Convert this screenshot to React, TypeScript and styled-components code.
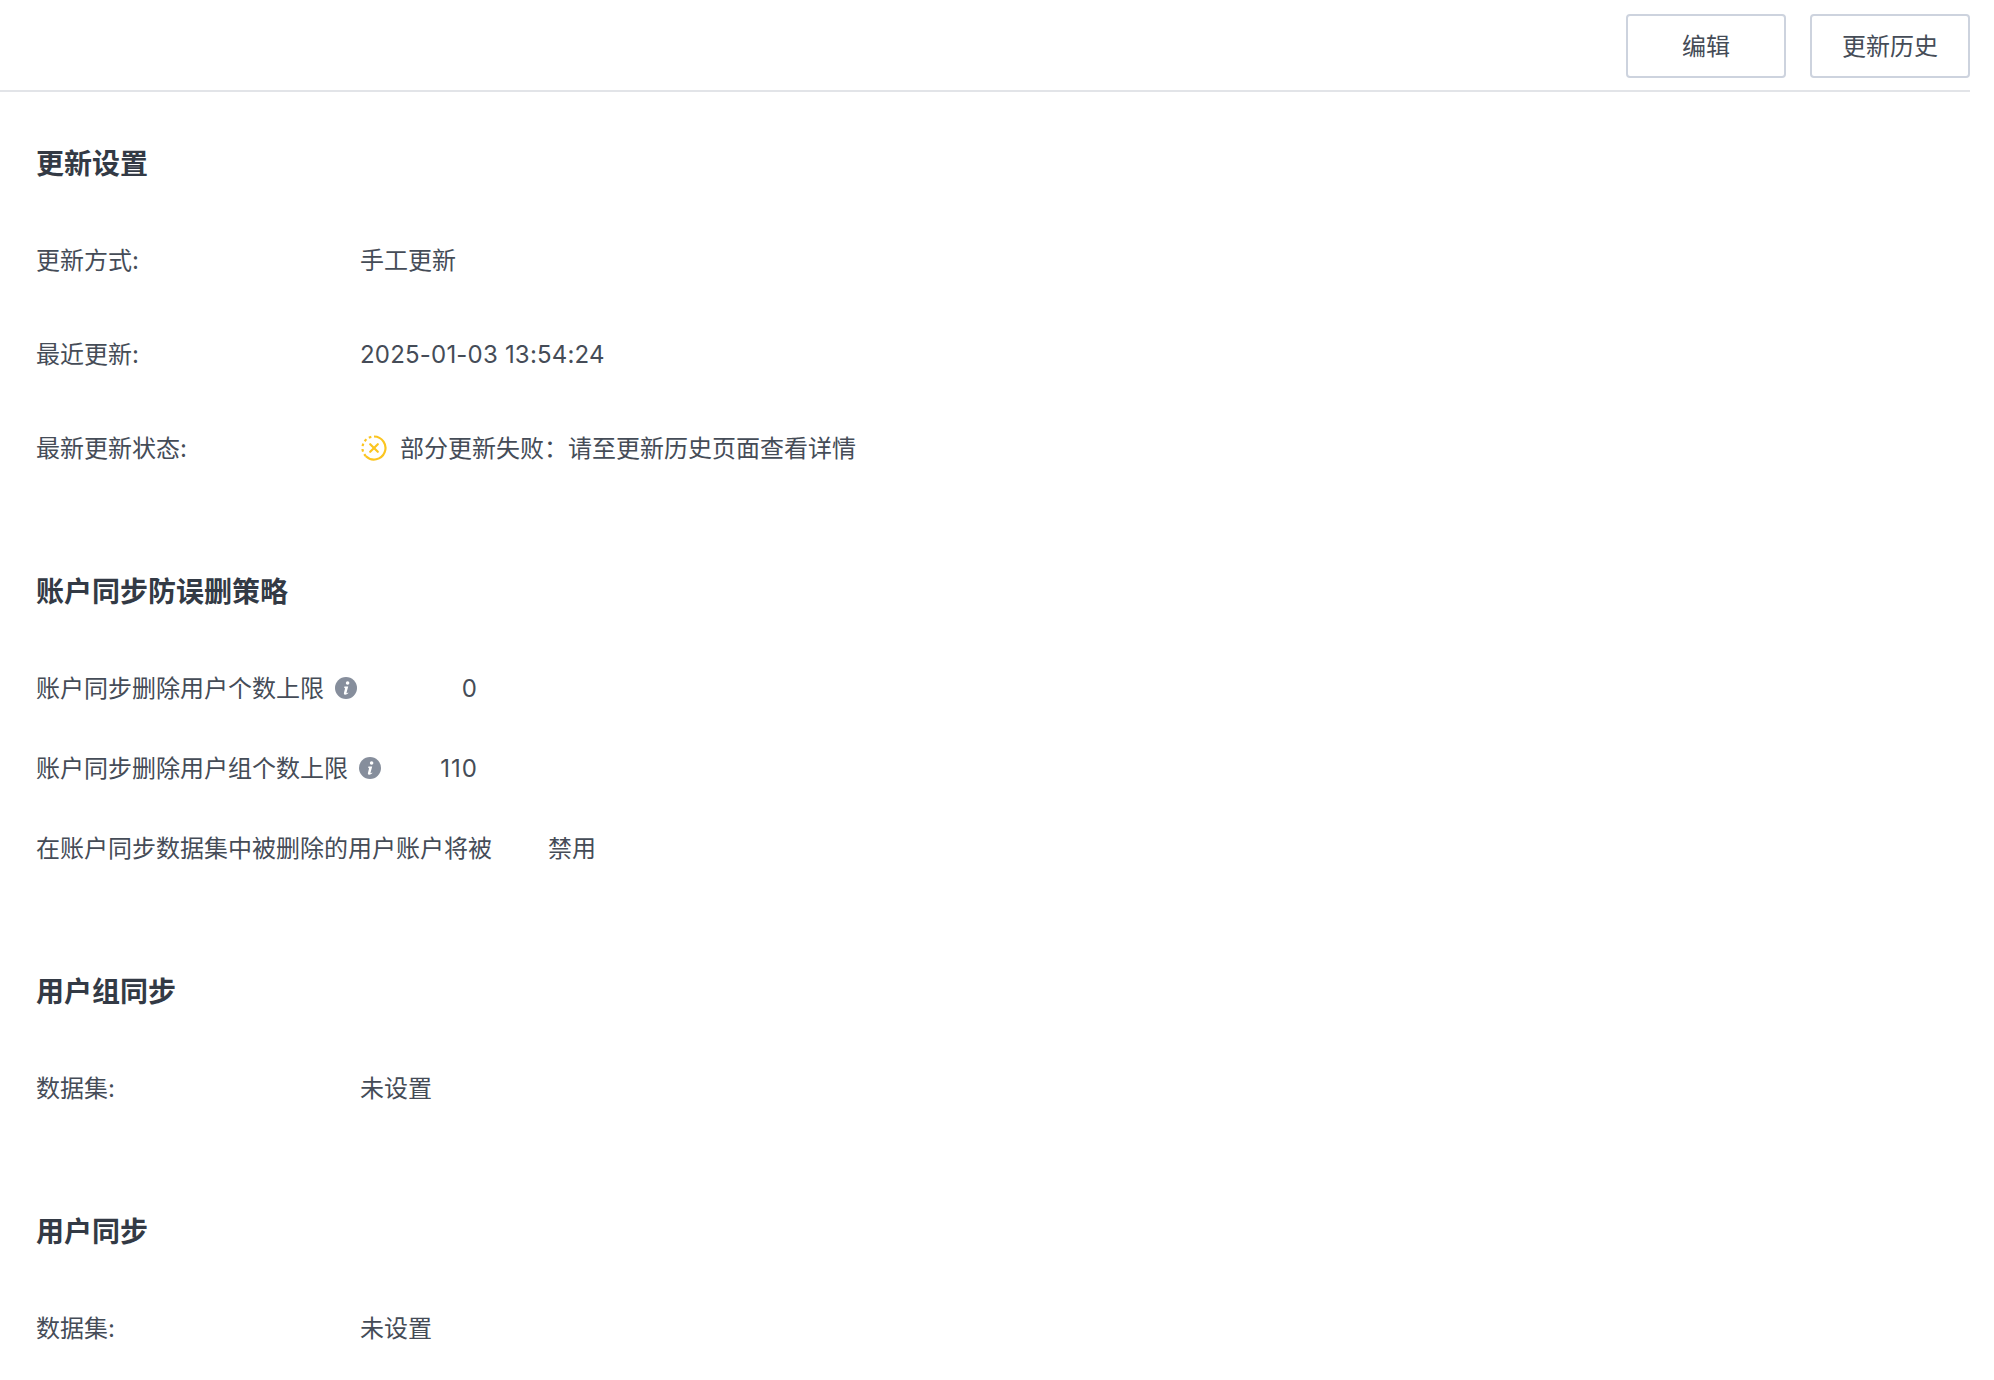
import React from 'react';
import styled, { createGlobalStyle } from 'styled-components';

const Global = createGlobalStyle`
  html, body { margin: 0; padding: 0; background: #fff; }
  body { font-family: "Inter", "Noto Sans CJK SC", sans-serif; color: #454c57; font-size: 24px; }
`;

const Page = styled.div`
  width: 1970px;
  height: 1380px;
  overflow: hidden;
`;

const Toolbar = styled.header`
  display: flex;
  justify-content: flex-end;
  align-items: flex-start;
  gap: 24px;
  height: 92px;
  padding-top: 14px;
  box-sizing: border-box;
  border-bottom: 2px solid #e2e4e8;
`;

const ToolButton = styled.button`
  width: 160px;
  height: 64px;
  box-sizing: border-box;
  border: 2px solid #cdd3de;
  border-radius: 4px;
  background: #fff;
  color: #454c57;
  font: inherit;
  padding: 0 0 3px;
`;

const Content = styled.main`
  padding: 0 36px;
`;

const Section = styled.section<{ $top: number }>`
  padding-top: ${p => p.$top}px;
`;

const Heading = styled.h2`
  margin: 0;
  height: 40px;
  font-size: 28px;
  line-height: 40px;
  font-weight: 700;
  color: #333a45;
`;

const FieldRow = styled.div`
  display: flex;
  align-items: center;
  height: 40px;
  margin-top: 54px;
  &:first-of-type { margin-top: 56px; }
`;

const LabelCell = styled.div`
  width: 324px;
  flex: none;
`;

const Text = styled.span`
  display: block;
  padding-bottom: 4px;
  white-space: nowrap;
`;

const Numeric = styled.span<{ $spacing?: number }>`
  letter-spacing: ${p => p.$spacing ?? 0.2}px;
  margin-right: -${p => p.$spacing ?? 0.2}px;
`;

const StatusIcon = styled.svg`
  width: 28px;
  height: 28px;
  margin-right: 12px;
  flex: none;
`;

const LimitRow = styled.div<{ $first?: boolean }>`
  display: flex;
  align-items: center;
  height: 40px;
  margin-top: ${p => (p.$first ? 56 : 40)}px;
`;

const LimitLabel = styled.div`
  display: flex;
  align-items: center;
  gap: 11px;
`;

const LimitNumberRow = styled(LimitRow)`
  width: 441px;
  justify-content: space-between;
`;

const PlainLimitRow = styled(LimitRow)`
  gap: 56px;
`;

const InfoIcon = styled.svg`
  width: 22px;
  height: 22px;
  flex: none;
`;

const Info = () => (
  <InfoIcon viewBox="0 0 22 22">
    <circle cx="11" cy="11" r="11" fill="#868e9c" />
    <circle cx="12.6" cy="6" r="1.8" fill="#fff" />
    <path d="M9.400 9.400h3.800l-1.700 6.400c-.1.500.4.600 1.700-.3l.2.500c-1.200 1.200-2.300 1.800-3.400 1.700-1-.1-1.300-.8-1-1.900l1.100-4.500-.9-.3z" fill="#fff" />
  </InfoIcon>
);

export default function App() {
  return (
    <Page>
      <Global />
      <Toolbar>
        <ToolButton>编辑</ToolButton>
        <ToolButton>更新历史</ToolButton>
      </Toolbar>
      <Content>
        <Section $top={52}>
          <Heading>更新设置</Heading>
          <FieldRow><LabelCell><Text>更新方式:</Text></LabelCell><Text>手工更新</Text></FieldRow>
          <FieldRow><LabelCell><Text>最近更新:</Text></LabelCell><Numeric>2025-01-03 13:54:24</Numeric></FieldRow>
          <FieldRow>
            <LabelCell><Text>最新更新状态:</Text></LabelCell>
            <StatusIcon viewBox="0 0 28 28" fill="none" stroke="#fbc520" strokeWidth="2.200">
              <path d="M14 2.500a11.500 11.500 0 1 1-8.100 19.700" />
              <path d="M5.900 22.200A11.500 11.500 0 0 1 14 2.500" strokeDasharray="2.600 2.800" />
              <path d="M10.200 10.200l7.600 7.600M17.800 10.200l-7.600 7.600" strokeLinecap="round" />
            </StatusIcon>
            <Text>部分更新失败：请至更新历史页面查看详情</Text>
          </FieldRow>
        </Section>
        <Section $top={104}>
          <Heading>账户同步防误删策略</Heading>
          <LimitNumberRow $first>
            <LimitLabel><Text>账户同步删除用户个数上限</Text><Info /></LimitLabel><Numeric>0</Numeric>
          </LimitNumberRow>
          <LimitNumberRow>
            <LimitLabel><Text>账户同步删除用户组个数上限</Text><Info /></LimitLabel><Numeric $spacing={1}>110</Numeric>
          </LimitNumberRow>
          <PlainLimitRow>
            <Text>在账户同步数据集中被删除的用户账户将被</Text><Text>禁用</Text>
          </PlainLimitRow>
        </Section>
        <Section $top={104}>
          <Heading>用户组同步</Heading>
          <FieldRow><LabelCell><Text>数据集:</Text></LabelCell><Text>未设置</Text></FieldRow>
        </Section>
        <Section $top={104}>
          <Heading>用户同步</Heading>
          <FieldRow><LabelCell><Text>数据集:</Text></LabelCell><Text>未设置</Text></FieldRow>
        </Section>
      </Content>
    </Page>
  );
}
